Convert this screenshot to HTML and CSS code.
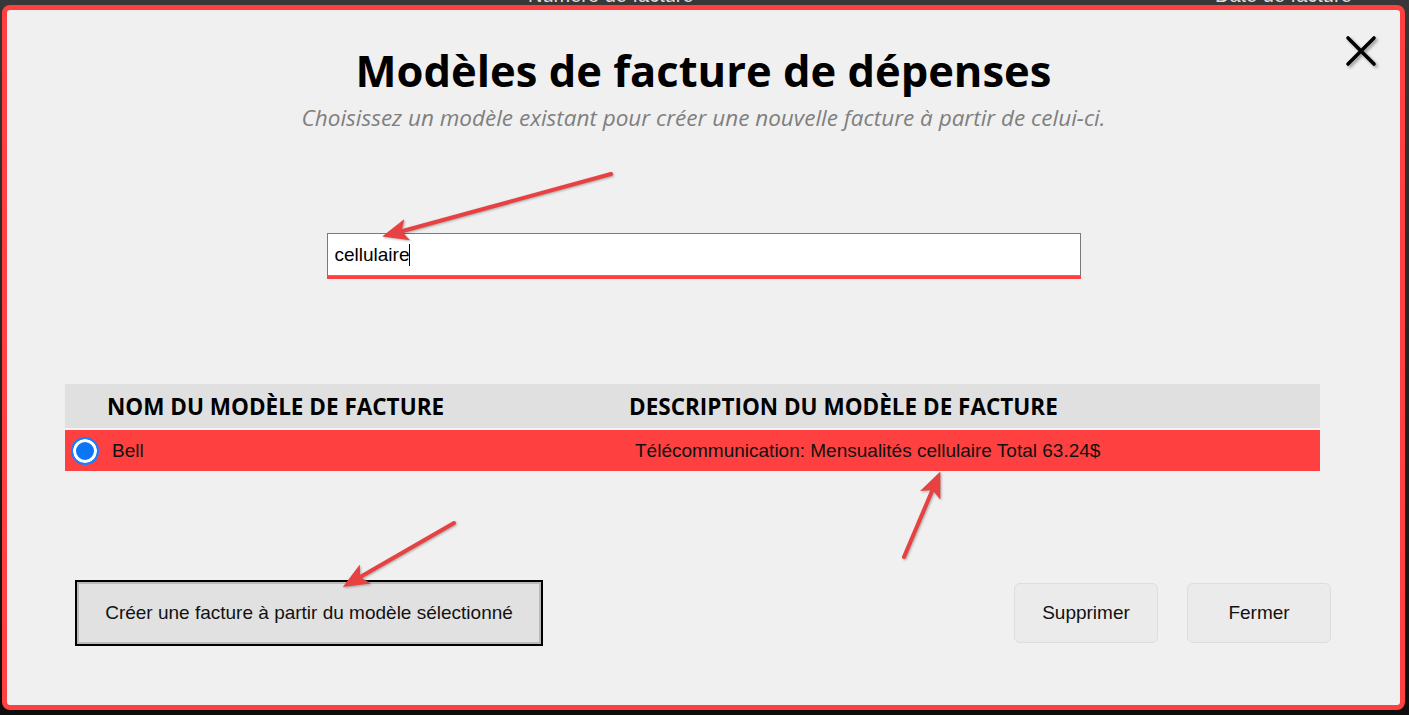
FILE: index.html
```html
<!DOCTYPE html>
<html lang="fr">
<head>
  <meta charset="UTF-8">
  <meta name="viewport" content="width=device-width, initial-scale=1.0">
  <title>Modèles de facture de dépenses</title>
  <link rel="stylesheet" href="styles.css">
</head>
<body>
  <div class="backdrop">
    <span class="bg-label bg-number">Numéro de facture</span>
    <span class="bg-label bg-date">Date de facture</span>
  </div>

  <div class="modal">
    <button class="close" aria-label="Fermer">
      <svg width="32" height="32" viewBox="0 0 32 32">
        <path d="M3 3 L29 29 M29 3 L3 29" stroke="#000" stroke-width="3.6" stroke-linecap="round" fill="none"/>
      </svg>
    </button>

    <div class="modal-head">
      <h1>Modèles de facture de dépenses</h1>
      <p class="subtitle">Choisissez un modèle existant pour créer une nouvelle facture à partir de celui-ci.</p>
    </div>

    <div class="search">
      <div class="search-field" role="textbox">cellulaire<span class="caret"></span></div>
    </div>

    <div class="models">
      <div class="models-head">
        <div class="col-name">NOM DU MODÈLE DE FACTURE</div>
        <div class="col-desc">DESCRIPTION DU MODÈLE DE FACTURE</div>
      </div>
      <div class="models-row selected">
        <div class="cell-name"><span class="radio"></span>Bell</div>
        <div class="cell-desc">Télécommunication: Mensualités cellulaire Total 63.24$</div>
      </div>
    </div>

    <div class="actions">
      <button class="btn-create">Créer une facture à partir du modèle sélectionné</button>
      <div class="actions-right">
        <button class="btn">Supprimer</button>
        <button class="btn">Fermer</button>
      </div>
    </div>
  </div>

  <!-- annotation arrows drawn over the screenshot -->
  <svg class="annotations" width="1409" height="715" viewBox="0 0 1409 715">
    <defs>
      <marker id="head" markerUnits="userSpaceOnUse" markerWidth="26" markerHeight="22" viewBox="0 0 26 22" refX="20" refY="11" orient="auto">
        <path d="M0 0 L26 11 L0 22 L6 11 Z" fill="#e84141"/>
      </marker>
    </defs>
    <g stroke="#e84141" stroke-width="4" stroke-linecap="round" fill="none" marker-end="url(#head)">
      <line x1="611" y1="174" x2="388" y2="235"/>
      <line x1="454" y1="523" x2="348" y2="584"/>
      <line x1="904" y1="557" x2="938" y2="477"/>
    </g>
  </svg>
</body>
</html>
```

FILE: styles.css
```css
body {
  margin: 0;
  width: 1409px;
  height: 715px;
  overflow: hidden;
  background: linear-gradient(#383838, #0e0e0e);
  font-family: "Liberation Sans", Arial, sans-serif;
}
.backdrop {
  height: 715px;
}
.bg-label {
  position: absolute;
  top: -17px;
  font-size: 20px;
  line-height: 24px;
  color: #ddd;
}
.bg-number {
  left: 528px;
}
.bg-date {
  left: 1215px;
}
.modal {
  position: fixed;
  left: 2px;
  top: 5px;
  width: 1403px;
  height: 705px;
  box-sizing: border-box;
  border: 5px solid #ff4040;
  border-radius: 8px;
  background-color: #f0f0f0;
  display: flex;
  flex-direction: column;
}
.close {
  position: absolute;
  top: 25px;
  right: 23px;
  padding: 0;
  border: none;
  background: none;
  cursor: pointer;
  filter: drop-shadow(2px 2px 1.5px rgba(0,0,0,0.35));
}
.close svg {
  display: block;
}
.modal-head {
  padding-top: 35px;
  text-align: center;
}
h1 {
  margin: 0;
  font-family: "Open Sans", sans-serif;
  font-size: 43.5px;
  line-height: 52px;
  font-weight: 700;
  color: #000;
}
.subtitle {
  margin: 7px 0 0;
  font-family: "Open Sans", sans-serif;
  font-style: italic;
  font-size: 22.5px;
  line-height: 28px;
  color: #7f7f7f;
}
.search {
  margin-top: 101px;
  display: flex;
  justify-content: center;
}
.search-field {
  width: 754px;
  height: 43px;
  box-sizing: border-box;
  border: 1px solid #7a7a7a;
  border-bottom-color: #888;
  box-shadow: 0 3px 0 #ff4040;
  background: #fff;
  padding: 0 7px;
  display: flex;
  align-items: center;
  font-size: 19px;
  color: #000;
}
.caret {
  width: 1px;
  height: 22px;
  background: #000;
}
.models {
  margin: 108px 0 0 58px;
  width: 1255px;
}
.models-head,
.models-row {
  display: grid;
  grid-template-columns: 564px 1fr;
  align-items: center;
}
.models-head {
  height: 44px;
  background-color: #e0e0e0;
  border-bottom: 2px solid #f4f4f4;
  font-family: "Open Sans", sans-serif;
  font-weight: 700;
  font-size: 22.5px;
  color: #000;
}
.col-name {
  padding-left: 42px;
}
.models-row {
  height: 41px;
  font-size: 19px;
  color: #111;
}
.models-row.selected {
  background-color: #ff4040;
}
.cell-name {
  display: flex;
  align-items: center;
  gap: 13px;
  padding-left: 6px;
}
.cell-desc {
  padding-left: 6px;
}
.radio {
  width: 28px;
  height: 28px;
  box-sizing: border-box;
  border-radius: 50%;
  border: 2px solid #1a7dff;
  background: #0a76f5;
  box-shadow: inset 0 0 0 3px #fff;
}
.actions {
  margin: 109px 69px 0 68px;
  display: flex;
  justify-content: space-between;
  align-items: center;
}
.actions-right {
  display: flex;
  gap: 29px;
}
button {
  font-family: "Liberation Sans", Arial, sans-serif;
  font-size: 19px;
  color: #111;
  cursor: pointer;
}
.btn-create {
  width: 468px;
  height: 66px;
  background-color: #e1e1e1;
  border: 2px solid #000;
  box-shadow: inset 0 0 0 2px #bababa;
}
.btn {
  width: 144px;
  height: 60px;
  background-color: #ebebeb;
  border: 1px solid #dddddd;
  border-radius: 6px;
}
.annotations {
  position: fixed;
  left: 0;
  top: 0;
  pointer-events: none;
  filter: drop-shadow(1px 1px 1px rgba(0,0,0,0.3));
}
```
